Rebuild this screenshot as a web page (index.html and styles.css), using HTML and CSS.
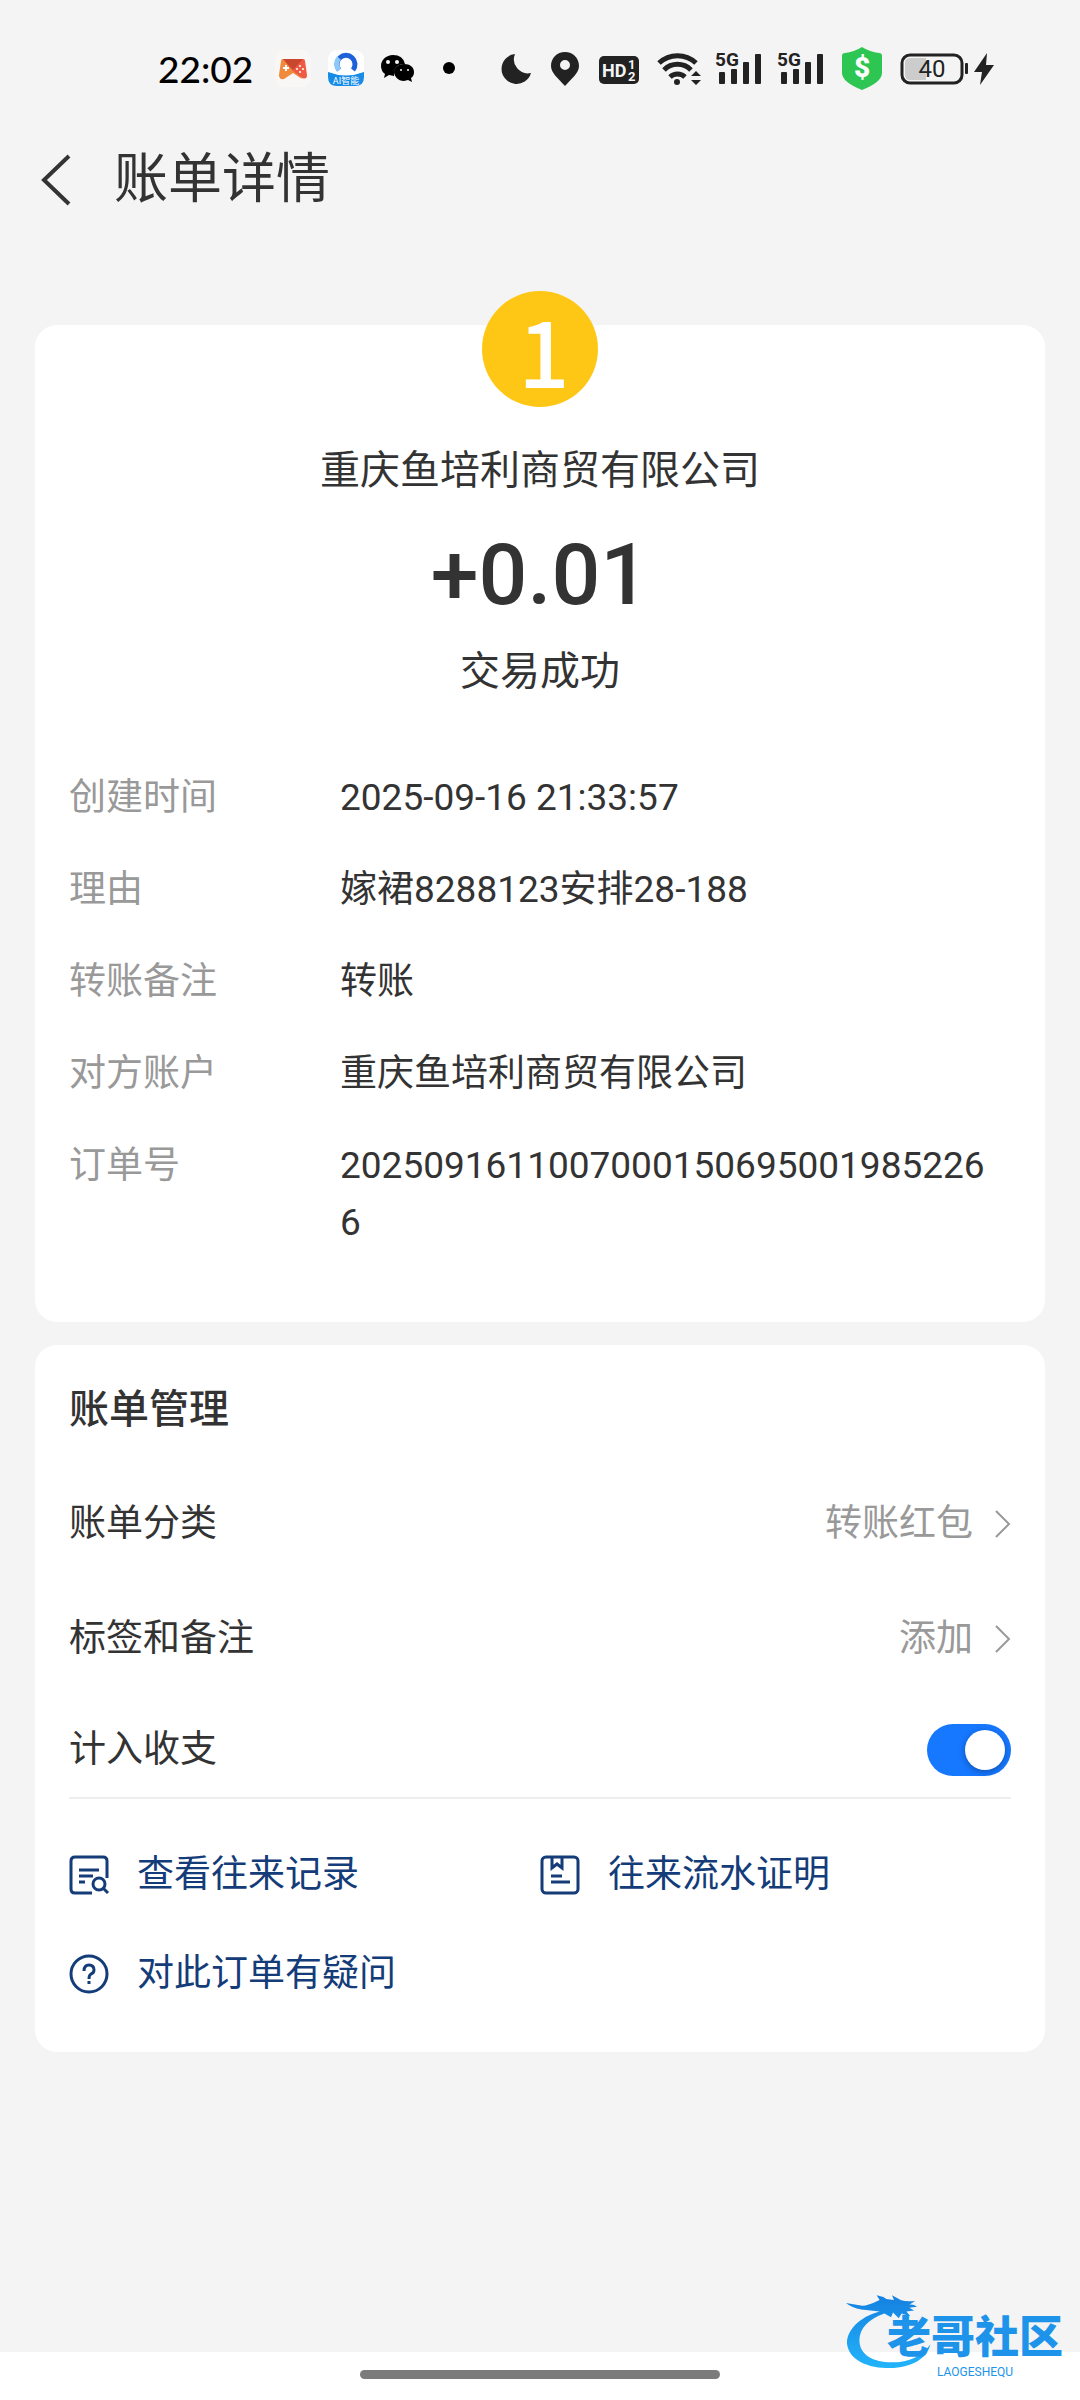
FILE: index.html
```html
<!DOCTYPE html>
<html lang="zh-CN">
  <head>
    <meta charset="UTF-8" />
    <meta name="viewport" content="width=device-width, initial-scale=1" />
    <title>账单详情</title>
    <link rel="stylesheet" href="styles.css">
  </head>
  <body>
    <div class="status-bar">
      <span class="time">22:02</span>
      <div class="notices">
        <svg width="36" height="44" viewBox="0 0 36 44">
          <rect y="4" width="36" height="37" rx="9" fill="#f9f7f6" />
          <path d="M8 13h9l10 20-9-6-9 6q-5 1-5-4l2-14q0-2 2-2z" fill="#f08a3c" />
          <path d="M8 13h20q2 0 2 2l2 14q0 5-5 3l-9-7z" fill="#ee5a44" />
          <path d="M8 13h20L18 24z" fill="#c9472c" />
          <path d="M8 22h6M11 19v6" stroke="#fff" stroke-width="2" />
          <g fill="#fff"><circle cx="25" cy="20" r="1" /><circle cx="22" cy="23" r="1" /><circle cx="28" cy="23" r="1" /><circle cx="25" cy="26" r="1" /></g>
        </svg>
        <svg width="36" height="44" viewBox="0 0 36 44">
          <rect y="4" width="36" height="36" rx="9" fill="#fff" />
          <path d="M0 26q18 7 36 0v5q0 9-9 9H9q-9 0-9-9z" fill="#168be8" />
          <path d="M11 24a9 9 0 1 1 14 0" fill="none" stroke="#1d62d8" stroke-width="5" />
          <path d="M11 24a9 9 0 0 1 0-12" fill="none" stroke="#8cc8f8" stroke-width="5" />
          <text x="18" y="38" class="tiny" text-anchor="middle">AI智能</text>
        </svg>
        <svg width="34" height="44" viewBox="0 0 34 44">
          <path d="M12 9C5 9 0 14 0 20q0 5 4 8l-1 4 5-3 5 1q-1-12 11-12Q22 9 12 9z" />
          <path d="M23 18c-6 0-10 4-10 8s4 9 10 9l4-1 4 2-1-4q3-2 3-6c0-5-4-8-10-8z" />
          <g fill="#f4f4f4"><circle cx="7" cy="16" r="2" /><circle cx="16" cy="16" r="2" /><circle cx="20" cy="24" r="1" /><circle cx="27" cy="24" r="1" /></g>
        </svg>
      </div>
      <span class="dot"></span>
      <div class="system">
        <svg width="33" height="44" viewBox="0 0 33 44"><path d="M13 8A15 15 0 1 0 29 27A14 14 0 0 1 13 8z" /></svg>
        <svg width="32" height="44" viewBox="0 0 32 44"><path fill-rule="evenodd" d="M14 6C6 6 0 12 0 20c0 7 7 12 14 20 7-8 14-13 14-20C28 12 22 6 14 6zm0 8a5 5 0 1 1 0 10 5 5 0 0 1 0-10z" /></svg>
        <svg width="42" height="44" viewBox="0 0 42 44">
          <rect y="10" width="40" height="28" rx="5" />
          <text x="3" y="31" class="hd">HD</text>
          <text x="29" y="23" class="hd-num">1</text>
          <text x="29" y="35" class="hd-num">2</text>
        </svg>
        <svg width="42" height="44" viewBox="0 0 42 44">
          <path d="M2 17A27 27 0 0 1 39 17M7 24A19 19 0 0 1 34 24M13 31A11 11 0 0 1 28 31" fill="none" stroke="#222" stroke-width="5" />
          <circle cx="20" cy="36" r="3" />
          <path d="M34 30l5-5 5 5zM34 34h10l-5 5z" />
        </svg>
        <svg width="46" height="44" viewBox="0 0 46 44">
          <text x="0" y="20" class="net">5G</text>
          <rect x="4" y="26" width="6" height="12" rx="1" /><rect x="16" y="23" width="6" height="15" rx="1" /><rect x="28" y="16" width="6" height="22" rx="1" /><rect x="40" y="8" width="6" height="30" rx="1" />
        </svg>
        <svg width="48" height="44" viewBox="0 0 48 44">
          <text x="0" y="20" class="net">5G</text>
          <rect x="4" y="26" width="6" height="12" rx="1" /><rect x="16" y="23" width="6" height="15" rx="1" /><rect x="28" y="16" width="6" height="22" rx="1" /><rect x="40" y="8" width="6" height="30" rx="1" />
        </svg>
        <svg width="42" height="44" viewBox="0 0 42 44">
          <path d="M21 1q8 5 17 6 3 0 3 3v17q0 9-20 17Q1 36 1 27V10q0-3 3-3 9-1 17-6z" fill="#2dc653" />
          <text x="21" y="31" class="dollar" text-anchor="middle">$</text>
        </svg>
        <svg width="96" height="44" viewBox="0 0 96 44">
          <rect x="3" y="9" width="60" height="28" rx="8" fill="none" stroke="#222" stroke-width="3" />
          <path d="M27 12H11q-5 0-5 5v12q0 5 5 5h16z" fill="#ccc" />
          <rect x="66" y="17" width="3" height="11" rx="1" />
          <text x="33" y="31" class="level" text-anchor="middle">40</text>
          <path d="M88 7L75 26h8l-2 13 14-20h-8z" />
        </svg>
      </div>
    </div>

    <header class="nav">
      <button class="back" type="button" aria-label="返回">
        <svg width="32" height="54" viewBox="0 0 32 54"><path d="M29 3L4 27l25 24" fill="none" stroke="#333" stroke-width="4" /></svg>
      </button>
      <h1>账单详情</h1>
    </header>

    <main>
      <section class="card bill">
        <div class="avatar">1</div>
        <p class="name">重庆鱼培利商贸有限公司</p>
        <p class="amount">+0.01</p>
        <p class="state">交易成功</p>
        <dl class="details">
          <dt>创建时间</dt>
          <dd>2025-09-16 21:33:57</dd>
          <dt>理由</dt>
          <dd>嫁裙8288123安排28-188</dd>
          <dt>转账备注</dt>
          <dd>转账</dd>
          <dt>对方账户</dt>
          <dd>重庆鱼培利商贸有限公司</dd>
          <dt>订单号</dt>
          <dd>20250916110070001506950019852266</dd>
        </dl>
      </section>

      <section class="card manage">
        <h2>账单管理</h2>
        <a class="row" href="#">
          <span>账单分类</span>
          <span class="value">转账红包</span>
          <svg width="18" height="30" viewBox="0 0 18 30"><path d="M3 2l13 13L3 28" fill="none" stroke="#999" stroke-width="2" /></svg>
        </a>
        <a class="row" href="#">
          <span>标签和备注</span>
          <span class="value">添加</span>
          <svg width="18" height="30" viewBox="0 0 18 30"><path d="M3 2l13 13L3 28" fill="none" stroke="#999" stroke-width="2" /></svg>
        </a>
        <div class="row last">
          <label for="count">计入收支</label>
          <input type="checkbox" id="count" class="switch" checked />
        </div>
        <nav class="links">
          <a href="#">
            <svg width="40" height="40" viewBox="0 0 40 40">
              <path d="M38 23V6q0-4-4-4H6Q2 2 2 6v28q0 4 4 4h17M10 15h20M10 21h14M10 27h6" />
              <circle cx="30" cy="29" r="6" /><path d="M34 33l5 5" />
            </svg>
            查看往来记录
          </a>
          <a href="#">
            <svg width="40" height="40" viewBox="0 0 40 40">
              <rect x="2" y="2" width="36" height="36" rx="4" />
              <path d="M12 2v11l5-4 5 4V2M11 21h11M11 27h19" />
            </svg>
            往来流水证明
          </a>
          <a href="#">
            <svg width="40" height="40" viewBox="0 0 40 40">
              <circle cx="20" cy="20" r="18" />
              <path d="M15 17q0-6 5-6t5 5q0 3-3 4-2 1-2 5M20 27v3" />
            </svg>
            对此订单有疑问
          </a>
        </nav>
      </section>
    </main>

    <footer class="home">
      <span class="home-bar"></span>
      <div class="watermark">
        <svg width="96" height="71" viewBox="0 0 100 74">
          <defs>
            <linearGradient id="blue" x1="0" y1="0" x2="0" y2="1">
              <stop offset="0" stop-color="#1580e0" />
              <stop offset="1" stop-color="#22b4fb" />
            </linearGradient>
          </defs>
          <path fill="url(#blue)" d="M36 12C14 18 2 32 2 45c2 18 22 26 45 26 22-1 38-9 42-25-8 12-22 19-40 19-20 0-34-8-34-23 0-12 9-22 26-28l7 4 2-5 6 6 3-5 9 3-4-5 8-1-5-3 8-1q-4-3-8-2l6-4q-10 1-15-1l-9-5 2 5-8-1-3-2-7-2 3 5Q24 6 18 6L1 3q6 5 16 7z" />
        </svg>
        <div>
          <strong>老哥社区</strong>
          <small>LAOGESHEQU</small>
        </div>
      </div>
    </footer>
  </body>
</html>
```

FILE: styles.css
```css
* {
  box-sizing: border-box;
}
body {
  margin: 0;
  min-height: 100vh;
  display: flex;
  flex-direction: column;
  background-color: #f4f4f4;
  color: #333;
  font-family: Roboto, "Noto Sans CJK SC", sans-serif;
  font-size: 37px;
  line-height: 57px;
}
h1,
h2,
p,
dl,
dd {
  margin: 0;
  font-weight: 400;
}
a {
  color: inherit;
  text-decoration: none;
}
svg {
  display: block;
  flex: none;
  overflow: visible;
}

/* status bar */
.status-bar {
  display: flex;
  align-items: center;
  height: 136px;
  padding-left: 158px;
  fill: #000;
}
.time {
  font-family: Lato, sans-serif;
  font-size: 37px;
  font-weight: 500;
  color: #000;
}
.notices {
  display: flex;
  gap: 17px;
  margin-left: 22px;
}
.dot {
  width: 12px;
  height: 12px;
  margin: 0 47px 0 28px;
  border-radius: 50%;
  background-color: #000;
}
.system {
  display: flex;
  gap: 16px;
  fill: #222;
}
.tiny {
  fill: #fff;
  font-size: 9px;
}
.hd {
  fill: #f4f4f4;
  font-size: 18px;
  font-weight: 700;
}
.hd-num {
  fill: #f4f4f4;
  font-size: 13px;
  font-weight: 700;
}
.net {
  font-size: 19px;
  font-weight: 700;
}
.dollar {
  fill: #fff;
  font-size: 28px;
  font-weight: 900;
}
.level {
  font-size: 24px;
}

/* title */
.nav {
  display: flex;
  align-items: center;
  height: 85px;
  padding: 2px 0 0 40px;
}
.back {
  padding: 0;
  margin-right: 42px;
  border: none;
  background: none;
  cursor: pointer;
}
.nav h1 {
  font-size: 54px;
}

/* cards */
main {
  flex: 1;
  padding: 104px 35px 40px;
}
.card {
  padding: 0 34px;
  border-radius: 22px;
  background-color: #fff;
}
.bill {
  display: flex;
  flex-direction: column;
  align-items: center;
  padding-bottom: 71px;
}
.avatar {
  width: 116px;
  height: 116px;
  margin-top: -34px;
  padding-left: 8px;
  border-radius: 50%;
  background-color: #ffc715;
  color: #fff;
  font-family: "Noto Sans CJK SC", sans-serif;
  font-size: 90px;
  font-weight: 500;
  line-height: 116px;
  text-align: center;
}
.name,
.state {
  font-size: 40px;
  line-height: 60px;
}
.name {
  margin-top: 34px;
}
.amount {
  margin: 24px 0 17px;
  font-size: 86px;
  font-weight: 500;
  line-height: 100px;
}
.details {
  display: grid;
  grid-template-columns: 271px 1fr;
  row-gap: 35px;
  width: 100%;
  margin-top: 67px;
}
.details dt {
  color: #999;
}
.details dd {
  padding-right: 16px;
  word-break: break-all;
}
.manage {
  margin-top: 23px;
  padding-top: 35px;
  padding-bottom: 50px;
}
.manage h2 {
  margin-bottom: 26px;
  font-size: 40px;
  font-weight: 500;
  line-height: 60px;
}
.row {
  display: flex;
  align-items: center;
  height: 115px;
}
.row .value {
  margin-left: auto;
  margin-right: 20px;
  color: #999;
}
.row.last {
  justify-content: space-between;
  height: 103px;
  padding-top: 6px;
  border-bottom: 2px solid #eee;
}
.switch {
  appearance: none;
  width: 84px;
  height: 52px;
  margin: 0;
  padding: 6px;
  border-radius: 26px;
  background-color: #1677ff;
  cursor: pointer;
}
.switch::before {
  content: "";
  display: block;
  width: 40px;
  height: 40px;
  border-radius: 50%;
  background-color: #fff;
  box-shadow: 0 2px 6px rgba(0, 0, 0, 0.3);
}
.switch:checked::before {
  margin-left: auto;
}
.switch:not(:checked) {
  background-color: #ccc;
}
.links {
  display: grid;
  grid-template-columns: 1fr 1fr;
  row-gap: 42px;
  padding-top: 47px;
  color: #143c78;
}
.links a {
  display: flex;
  align-items: center;
  gap: 28px;
}
.links svg {
  fill: none;
  stroke: #143c78;
  stroke-width: 3;
}

/* bottom gesture bar */
.home {
  position: relative;
  display: flex;
  justify-content: center;
  height: 48px;
  padding-top: 18px;
  background-color: #fff;
}
.home-bar {
  width: 360px;
  height: 9px;
  border-radius: 5px;
  background-color: #7b7b7b;
}
.watermark {
  position: absolute;
  right: 17px;
  bottom: 20px;
  display: flex;
  color: #1d93ea;
}
.watermark svg {
  margin-right: -54px;
}
.watermark div {
  display: flex;
  flex-direction: column;
  align-items: center;
  padding-top: 12px;
}
.watermark strong {
  font-size: 44px;
  font-weight: 900;
  line-height: 52px;
}
.watermark small {
  font-size: 12px;
  line-height: 16px;
}
```
